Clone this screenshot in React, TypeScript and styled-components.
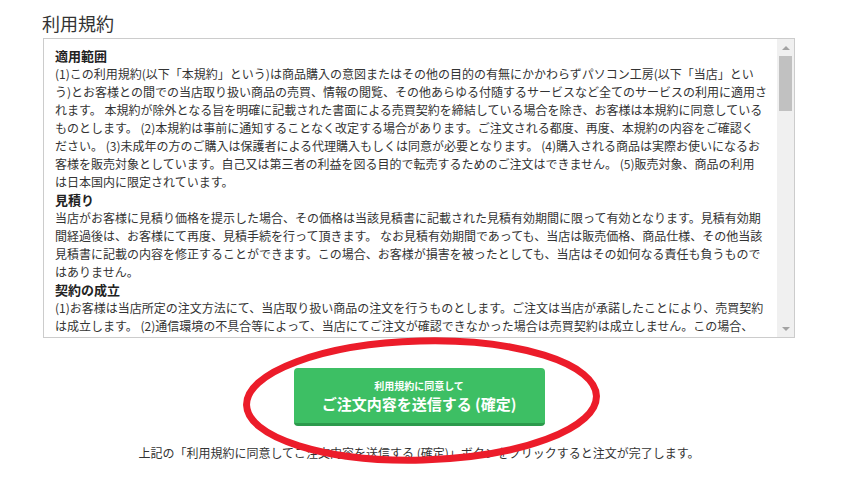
import React from 'react';
import styled, { createGlobalStyle } from 'styled-components';

const GlobalStyle = createGlobalStyle`
    html, body {
        margin: 0;
        padding: 0;
        background: #fff;
    }
    body {
        font-family: 'Noto Sans CJK JP', 'Noto Sans', sans-serif;
        color: #333;
    }
`;

const Page = styled.div`
    position: relative;
    width: 844px;
    height: 501px;
    overflow: hidden;
`;

const Container = styled.div`
    width: 752px;
    margin-left: 43px;
    padding-top: 11px;
    display: flex;
    flex-direction: column;
    align-items: center;
`;

const Title = styled.h2`
    align-self: flex-start;
    margin: 0 0 3px -1px;
    font-size: 18px;
    font-weight: 400;
    line-height: 24px;
    color: #333;
`;

const TermsBox = styled.div`
    box-sizing: border-box;
    width: 752px;
    height: 300px;
    border: 1px solid #ccc;
    display: flex;
    flex-direction: row;
`;

const TermsText = styled.div`
    flex: 1;
    padding: 8px 4px 8px 11px;
    overflow: hidden;
    font-size: 12px;
    line-height: 18px;
    color: #333;
`;

const ScrollBar = styled.div`
    width: 17px;
    flex-shrink: 0;
    background: #f0f0f0;
    display: flex;
    flex-direction: column;
`;

const ScrollArrow = styled.div<{ $down?: boolean }>`
    height: 17px;
    display: flex;
    align-items: center;
    justify-content: center;
    &::before {
        content: '';
        width: 0;
        height: 0;
        border-left: 4px solid transparent;
        border-right: 4px solid transparent;
        ${(props) =>
            props.$down
                ? 'border-top: 4px solid #a3a3a3;'
                : 'border-bottom: 4px solid #a3a3a3;'}
    }
`;

const ScrollTrack = styled.div`
    flex: 1;
    padding: 0 2px;
`;

const ScrollThumb = styled.div`
    height: 55px;
    background: #c1c1c1;
`;

const SectionTitle = styled.div`
    font-size: 13px;
    font-weight: 700;
    line-height: 18px;
    color: #222;
`;

const Line = styled.div`
    font-size: 12px;
    line-height: 18px;
`;

const SubmitButton = styled.button`
    box-sizing: border-box;
    margin-top: 30px;
    width: 251px;
    height: 58px;
    border: 0;
    border-bottom: 3px solid #2c9a4c;
    border-radius: 4px;
    background: #3dbf64;
    color: #fff;
    font-family: 'Noto Sans CJK JP', sans-serif;
    display: flex;
    flex-direction: column;
    align-items: center;
    justify-content: center;
    gap: 1px;
    padding: 2px 0 0;
    cursor: pointer;
`;

const ButtonSub = styled.span`
    font-size: 10px;
    font-weight: 700;
    line-height: 14px;
`;

const ButtonMain = styled.span`
    font-size: 15px;
    font-weight: 700;
    line-height: 20px;
`;

const Note = styled.p`
    margin: 18px 0 0;
    font-size: 12px;
    line-height: 18px;
    color: #333;
`;

const Annotation = styled.svg`
    position: absolute;
    left: 0;
    top: 0;
    pointer-events: none;
`;

const sections = [
    {
        title: '適用範囲',
        lines: [
            '(1)この利用規約(以下「本規約」という)は商品購入の意図またはその他の目的の有無にかかわらずパソコン工房(以下「当店」とい',
            'う)とお客様との間での当店取り扱い商品の売買、情報の閲覧、その他あらゆる付随するサービスなど全てのサービスの利用に適用さ',
            'れます。 本規約が除外となる旨を明確に記載された書面による売買契約を締結している場合を除き、お客様は本規約に同意している',
            'ものとします。 (2)本規約は事前に通知することなく改定する場合があります。ご注文される都度、再度、本規約の内容をご確認く',
            'ださい。 (3)未成年の方のご購入は保護者による代理購入もしくは同意が必要となります。 (4)購入される商品は実際お使いになるお',
            '客様を販売対象としています。自己又は第三者の利益を図る目的で転売するためのご注文はできません。 (5)販売対象、商品の利用',
            'は日本国内に限定されています。',
        ],
    },
    {
        title: '見積り',
        lines: [
            '当店がお客様に見積り価格を提示した場合、その価格は当該見積書に記載された見積有効期間に限って有効となります。見積有効期',
            '間経過後は、お客様にて再度、見積手続を行って頂きます。 なお見積有効期間であっても、当店は販売価格、商品仕様、その他当該',
            '見積書に記載の内容を修正することができます。この場合、お客様が損害を被ったとしても、当店はその如何なる責任も負うもので',
            'はありません。',
        ],
    },
    {
        title: '契約の成立',
        lines: [
            '(1)お客様は当店所定の注文方法にて、当店取り扱い商品の注文を行うものとします。ご注文は当店が承諾したことにより、売買契約',
            'は成立します。 (2)通信環境の不具合等によって、当店にてご注文が確認できなかった場合は売買契約は成立しません。この場合、',
            '当店は一切の責任を負わないものとします。 (3)ご注文内容に不備がある場合、在庫状況により商品のご用意ができない場合、その他当店が不適当と判断した場合には、ご注文をお断りすることがあります。',
        ],
    },
    {
        title: '価格',
        lines: [
            '(1)商品の価格は、ご注文時に当店ウェブサイト上に表示された価格とします。表示価格は消費税を含んだ総額表示となります。 (2)当店は、事前の予告なく商品の価格を変更することがあります。',
        ],
    },
    {
        title: 'お支払い',
        lines: [
            '(1)お支払い方法は、クレジットカード決済、銀行振込、代金引換、コンビニ決済、ショッピングローンのいずれかからお選び頂けます。 (2)お支払い方法によっては、別途手数料が発生する場合があります。',
        ],
    },
];

const App = () => {
    return (
        <Page>
            <GlobalStyle />
            <Container>
                <Title>利用規約</Title>
                <TermsBox>
                    <TermsText>
                        {sections.map((section) => (
                            <div key={section.title}>
                                <SectionTitle>{section.title}</SectionTitle>
                                {section.lines.map((line, i) => (
                                    <Line key={i}>{line}</Line>
                                ))}
                            </div>
                        ))}
                    </TermsText>
                    <ScrollBar>
                        <ScrollArrow />
                        <ScrollTrack>
                            <ScrollThumb />
                        </ScrollTrack>
                        <ScrollArrow $down />
                    </ScrollBar>
                </TermsBox>
                <SubmitButton type="button">
                    <ButtonSub>利用規約に同意して</ButtonSub>
                    <ButtonMain>ご注文内容を送信する (確定)</ButtonMain>
                </SubmitButton>
                <Note>
                    上記の「利用規約に同意してご注文内容を送信する (確定)」ボタンをクリックすると注文が完了します。
                </Note>
            </Container>
            <Annotation width="844" height="501" viewBox="0 0 844 501">
                <ellipse
                    cx="421.5"
                    cy="400.5"
                    rx="175"
                    ry="59.5"
                    transform="rotate(-1.5 421.5 400.5)"
                    fill="none"
                    stroke="#ec1c2a"
                    strokeWidth="7"
                />
            </Annotation>
        </Page>
    );
};

export default App;
